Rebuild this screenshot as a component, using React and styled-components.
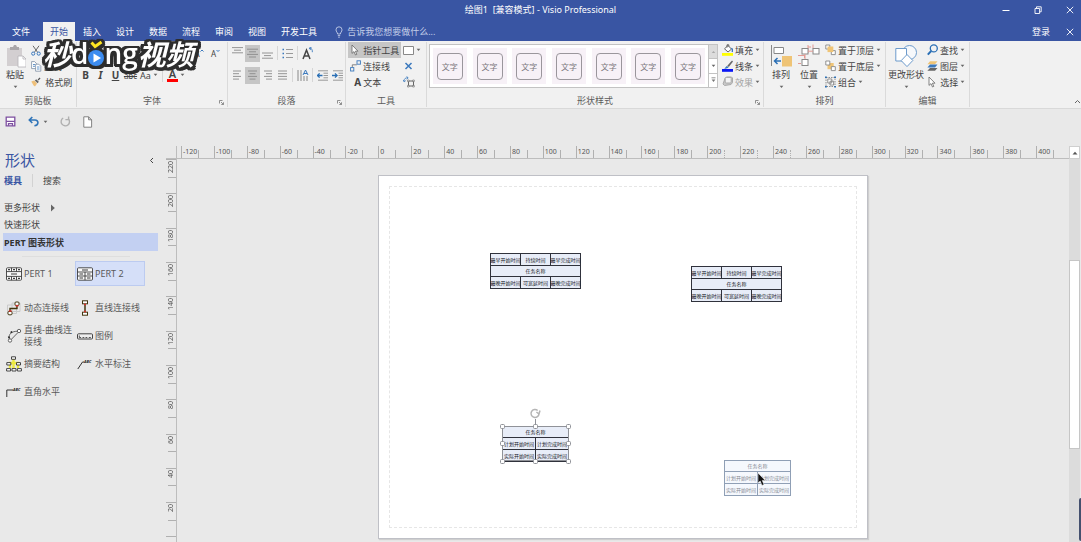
import React from 'react'
import styled, { createGlobalStyle, css } from 'styled-components';

const GlobalStyle = createGlobalStyle`
  * { box-sizing: border-box; }
  body {
    margin: 0;
    background: #e9e9e9;
    color: #444;
    font-family: "Noto Sans", "Noto Sans CJK SC", sans-serif;
    font-size: 9px;
  }
  button, input {
    font: inherit;
    color: inherit;
    background: none;
    border: 0;
    padding: 0;
    margin: 0;
  }
  h1, h2, p { margin: 0; font-weight: 400; }
  svg { display: block; flex: none; }
`;

const Window = styled.div`
  position: relative;
  display: flex;
  flex-direction: column;
  min-height: 100vh;
  overflow: hidden;
`;

/* ---------- title and tabs ---------- */

const TitleBar = styled.header`
  display: grid;
  grid-template-columns: 1fr auto 1fr;
  align-items: center;
  height: 20px;
  background: #3955a3;
  color: #fff;
`;
const Title = styled.h1`
  grid-column: 2;
  font-size: 9px;
  line-height: 20px;
  white-space: pre;
`;
const WindowButtons = styled.div`
  display: flex;
  justify-content: flex-end;
  gap: 10px;
`;
const WindowButton = styled.button`
  display: flex;
  align-items: center;
  justify-content: center;
  width: 22px;
  height: 20px;
`;
const TabRow = styled.nav`
  display: flex;
  align-items: stretch;
  height: 21px;
  padding-top: 2px;
  background: #3955a3;
  color: #fff;
`;
const Tab = styled.button`
  padding: 0 7px;
  margin-right: 1px;
  line-height: 18px;
  white-space: nowrap;
  ${p => p.$file && css`width: 42px; padding: 0 10px;`}
  ${p => p.$active && css`background: #f1f1f1; color: #3955a3;`}
`;
const TellMe = styled.label`
  display: flex;
  align-items: center;
  gap: 4px;
  flex: 1;
  margin-left: 10px;
  input { width: 140px; outline: 0; }
  input::placeholder { color: #c3cde8; opacity: 1; }
`;
const SignIn = styled.button`
  margin-right: 9px;
`;

/* ---------- ribbon ---------- */

const Ribbon = styled.div`
  display: flex;
  height: 68px;
  padding-top: 1px;
  background: #f1f1f1;
  border-bottom: 1px solid #d9d9d9;
`;
const Group = styled.section`
  position: relative;
  display: flex;
  flex-direction: column;
  flex: none;
  width: ${p => p.$w}px;
  height: 65px;
  border-right: 1px solid #dadada;
`;
const GroupBody = styled.div`
  display: flex;
  flex: 1;
  padding-left: ${p => p.$pad || 1}px;
`;
const GroupLabel = styled.h2`
  font-size: 9px;
  line-height: 12px;
  text-align: center;
  color: #5c5c5c;
`;
const Launcher = styled.button`
  position: absolute;
  right: 3px;
  bottom: 2px;
`;
const Collapse = styled.button`
  margin: auto 0 4px auto;
`;
const Stack = styled.div`
  display: flex;
  flex-direction: column;
  flex: ${p => (p.$grow ? 1 : 'none')};
  padding-left: ${p => p.$pad || 0}px;
`;
const ToolRow = styled.div`
  display: flex;
  align-items: center;
  height: 22px;
  ${p => p.$end && css`
    justify-content: flex-end;
    gap: 2px;
    padding-right: 4px;
  `}
`;
const SmallButton = styled.button`
  display: flex;
  align-items: center;
  gap: 2px;
  height: 16px;
  padding: 0 2px;
  white-space: nowrap;
  background: ${p => (p.$pressed ? '#c6c6c6' : 'none')};
  color: ${p => (p.$off ? '#a3a3a3' : '#444')};
`;
const BigButton = styled.button`
  display: flex;
  flex-direction: column;
  align-items: center;
  width: ${p => p.$w || 28}px;
  padding-top: 2px;
  line-height: 14px;
  white-space: nowrap;
  svg + span { margin-bottom: 3px; }
`;
const IconButton = styled.button`
  display: flex;
  align-items: center;
  justify-content: center;
  width: 15px;
  height: 17px;
  background: ${p => (p.$pressed ? '#c6c6c6' : 'none')};
`;
const Letter = styled.span`
  font-size: ${p => (p.$small ? 8 : 10)}px;
  font-weight: ${p => (p.$bold ? 700 : 400)};
  font-style: ${p => (p.$italic ? 'italic' : 'normal')};
  text-decoration: ${p => p.$line || 'none'};
`;
const ColourLetter = styled.span`
  font-size: 11px;
  line-height: 10px;
  font-weight: 600;
  border-bottom: 3px solid #f00;
  padding: 0 2px;
`;
const Divider = styled.i`
  width: 1px;
  height: 14px;
  margin: 0 2px;
  background: #d6d6d6;
`;
const Gallery = styled.div`
  display: flex;
  width: 289px;
  height: 44px;
  margin: 2px 0 0 1px;
  border: 1px solid #c3c3c3;
  background: #fff;
`;
const Swatches = styled.div`
  display: flex;
  flex: 1;
  align-items: center;
  justify-content: space-around;
`;
const Swatch = styled.button`
  display: flex;
  align-items: center;
  justify-content: center;
  width: 34px;
  height: 36px;
  background: #f7f1f7;
  span {
    width: 26px;
    border: 1px solid #9a969c;
    border-radius: 4px;
    font-size: 8px;
    line-height: 25px;
    color: #7a767c;
  }
`;
const GalleryScroll = styled.div`
  display: flex;
  flex-direction: column;
  width: 9px;
  border-left: 1px solid #c3c3c3;
  button {
    display: flex;
    align-items: center;
    justify-content: center;
    flex: 1;
  }
  button:first-child { background: #dcdcdc; }
  button + button { border-top: 1px solid #c3c3c3; }
`;
const QuickBar = styled.div`
  display: flex;
  align-items: center;
  gap: 12px;
  height: 25px;
  padding-left: 5px;
  button { display: flex; align-items: center; gap: 3px; }
`;

/* ---------- shapes pane ---------- */

const Body = styled.div`
  display: flex;
  flex: 1;
`;
const Sidebar = styled.aside`
  width: 166px;
  padding: 16px 8px 0 3px;
`;
const PaneHead = styled.div`
  display: flex;
  align-items: center;
  justify-content: space-between;
  height: 20px;
  padding: 0 4px 0 2px;
  h2 { font-size: 15px; line-height: 20px; color: #3955a3; }
`;
const PaneTabs = styled.div`
  display: flex;
  align-items: center;
  height: 20px;
  padding-left: 1px;
  margin-bottom: 9px;
`;
const PaneTab = styled.button`
  padding-right: 10px;
  & + & { padding: 0 0 0 10px; border-left: 1px solid #d2d2d2; }
  ${p => p.$active && css`color: #3955a3; font-weight: 700;`}
`;
const Stencil = styled.button`
  display: flex;
  align-items: center;
  gap: 11px;
  width: 100%;
  height: ${p => (p.$active ? 18 : 17)}px;
  padding-left: 1px;
  ${p => p.$active && css`background: #c3d0f2; color: #333; font-weight: 700;`}
`;
const Rule = styled.hr`
  width: 108px;
  margin: 5px 0 4px 19px;
  border: 0;
  border-top: 1px solid #dedede;
`;
const MasterGrid = styled.div`
  display: grid;
  grid-template-columns: 71px 72px;
  margin-bottom: ${p => p.$gap || 0}px;
  padding-left: 1px;
`;
const Master = styled.button`
  display: flex;
  align-items: center;
  gap: 2px;
  height: ${p => p.$h || 28}px;
  padding-left: 2px;
  line-height: 12px;
  text-align: left;
  color: #5a5a5a;
  ${p => p.$active && css`
    width: 70px;
    background: #d5dff8;
    border: 1px solid #bccbf0;
    padding-left: 1px;
  `}
`;

/* ---------- drawing area ---------- */

const Drawing = styled.main`
  display: grid;
  grid-template-columns: 11px 1fr 12px;
  grid-template-rows: 13px 1fr;
  flex: 1;
  padding-top: 12px;
`;
const Corner = styled.div`
  border-right: 1px solid #bdbdbd;
  border-bottom: 1px solid #bdbdbd;
`;
const RulerTop = styled.div`
  display: flex;
  padding-left: 4px;
  border-bottom: 1px solid #bdbdbd;
`;
const TickX = styled.div`
  position: relative;
  flex: 1 1 0;
  min-width: 0;
  padding-left: 1px;
  border-left: 1px solid #b0b0b0;
  font-size: 7px;
  line-height: 12px;
  color: #555;
  &::after {
    content: "";
    position: absolute;
    left: 50%;
    bottom: 0;
    height: 8px;
    border-left: 1px ${p => (p.$mark ? 'dotted' : 'solid')} #b0b0b0;
  }
`;
const RulerLeft = styled.div`
  display: flex;
  flex-direction: column;
  border-right: 1px solid #bdbdbd;
`;
const TickY = styled.div`
  position: relative;
  flex: ${p => (p.$last ? 1 : 9)} 1 0;
  min-height: 0;
  overflow: hidden;
  padding-top: 1px;
  border-top: 1px solid #b0b0b0;
  font-size: 7px;
  line-height: 9px;
  color: #555;
  span {
    display: block;
    writing-mode: vertical-rl;
    transform: rotate(180deg);
  }
  ${p => !p.$last && css`
    &::after {
      content: "";
      position: absolute;
      top: 50%;
      right: 0;
      width: 8px;
      border-top: 1px solid #b0b0b0;
    }
  `}
`;
const Canvas = styled.div`
  position: relative;
  overflow: hidden;
`;
const Page = styled.div`
  position: absolute;
  left: 201px;
  top: 16px;
  width: 490px;
  height: 364px;
  padding: 10px;
  background: #fff;
  border: 1px solid #bfc0c6;
  box-shadow: 1px 1px 1px #cfcfcf;
`;
const Margins = styled.div`
  height: 100%;
  border: 1px dashed #e6e6e6;
`;
const Shape = styled.div`
  position: absolute;
  left: ${p => p.$x}px;
  top: ${p => p.$y}px;
  width: ${p => p.$w}px;
  display: grid;
  grid-template-columns: repeat(${p => p.$cols}, 1fr);
  gap: 1px;
  padding: 1px;
  background: ${p => (p.$ghost ? '#8f9fb5' : '#30323c')};
  color: ${p => (p.$ghost ? '#858a94' : '#16181f')};
`;
const Cell = styled.div`
  display: flex;
  align-items: center;
  justify-content: center;
  min-width: 0;
  height: ${p => (p.$wide ? 10 : 11)}px;
  background: ${p => (p.$ghost ? '#f5f8fd' : '#e8edf8')};
  font-size: 5px;
  line-height: 8px;
  white-space: nowrap;
  ${p => p.$wide && css`grid-column: 1 / -1;`}
`;
const Handles = styled.svg`
  position: absolute;
  left: ${p => p.$x}px;
  top: ${p => p.$y}px;
`;

const Scroll = styled.div`
  grid-column: 3;
  grid-row: 1 / 3;
  display: flex;
  flex-direction: column;
  margin-right: 1px;
  background: #dcdcdc;
`;
const ScrollUp = styled.button`
  display: flex;
  align-items: center;
  justify-content: center;
  height: 13px;
  border: 1px solid #cfcfcf;
  background: #fff;
`;
const Track = styled.div`
  flex: ${p => p.$size} 1 0;
`;
const Thumb = styled.div`
  flex: 188 1 0;
  border: 1px solid #c6c6c6;
  background: #fff;
`;
const EdgeTab = styled.div`
  position: absolute;
  right: 0;
  bottom: 1px;
  width: 2px;
  height: 43px;
  background: #44506e;
  border-radius: 2px 0 0 2px;
`;

/* ---------- video mark ---------- */

const Mark = styled.div`
  position: absolute;
  left: 43px;
  top: 36px;
  display: flex;
  align-items: center;
  height: 34px;
  color: #fff;
  white-space: nowrap;
  filter: drop-shadow(2px 0 0 #2d2d2d) drop-shadow(-2px 0 0 #2d2d2d)
    drop-shadow(0 2px 0 #2d2d2d) drop-shadow(0 -2px 0 #2d2d2d)
    drop-shadow(1px 1px 0 #2d2d2d) drop-shadow(-1px 0 0 #2d2d2d);
  pointer-events: none;
`;
const MarkHan = styled.span`
  font-family: "Noto Sans CJK SC", sans-serif;
  font-size: 28px;
  font-style: italic;
  font-weight: 700;
  line-height: 34px;
`;
const MarkLatin = styled.span`
  font-family: "Open Sans", sans-serif;
  font-size: 28px;
  font-weight: 600;
  line-height: 34px;
`;

/* ---------- icons ---------- */

const Svg = ({ w, h, children, ...rest }) => (
  <svg width={w} height={h} viewBox={`0 0 ${w} ${h}`} fill="none" stroke="#666" strokeWidth="1" aria-hidden="true" {...rest}>
    {children}
  </svg>
);
const Caret = () => (
  <Svg w={5} h={4} stroke="none"><path d="M.7.8h3.6L2.5 3z" fill="#666" /></Svg>
);
const CloseIcon = () => (
  <Svg w={8} h={8} stroke="#fff" strokeWidth=".9"><path d="M.8.8l6.4 6.4M7.2.8L.8 7.2" /></Svg>
);
const LauncherIcon = () => (
  <Svg w={5} h={5} stroke="#777" strokeWidth=".8"><path d="M.5 3.5v-3h3M2 2l2.4 2.4M4.5 2.3v2.2H2.3" /></Svg>
);
const PasteIcon = () => (
  <Svg w={22} h={24} stroke="none">
    <path d="M3 4h15v18H3z" fill="#d3cfd1" />
    <path d="M6 3h3l1-2h2l1 2h2v3H6z" fill="#aaa7aa" />
    <path d="M14 12h5l3 3v8h-8z" fill="#fff" stroke="#b5b2b7" strokeWidth=".8" />
    <path d="M19 12v3h3" stroke="#b5b2b7" strokeWidth=".8" />
  </Svg>
);
const CutIcon = () => (
  <Svg w={10} h={11} stroke="#666"><path d="M2 .8l4.6 6.5M8 .8L3.4 7.3" /><circle cx="2.2" cy="8.6" r="1.6" stroke="#3a78bd" /><circle cx="7.7" cy="8.6" r="1.6" stroke="#3a78bd" /></Svg>
);
const CopyIcon = () => (
  <Svg w={11} h={11} stroke="#7d8ea5" strokeWidth=".8"><path d="M.6.6h3l2 2v5h-5z" fill="#fff" /><path d="M4.6 3.2h3.2l2 2v5H4.6z" fill="#fff" /><path d="M2 3.5h2M2 5.3h2M6 6h2.5M6 8h2.5" stroke="#3a78bd" /></Svg>
);
const BrushIcon = () => (
  <Svg w={10} h={10} stroke="none"><path d="M.3 4.6l3-1 2.8 3L4 9.4 2.6 8.6z" fill="#eec07b" /><path d="M3.8 3.4l1.4-1.2 2.6 2.6-1.2 1.4z" fill="#666" /><path d="M6.6 2.6L8.6.6l.9.9-2 2z" fill="#555" /></Svg>
);
const LinesIcon = ({ rows }) => (
  <Svg w={11} h={12} stroke="#8a8a8a" strokeWidth=".9">
    {rows.map(([x1, x2, y]) => <path key={y} d={`M${x1} ${y}H${x2}`} />)}
  </Svg>
);
const BulletsIcon = () => (
  <Svg w={11} h={11}><path d="M.5 1.5h1.5M.5 5.5h1.5M.5 9.5h1.5" stroke="#3a78bd" strokeWidth="1.5" /><path d="M4 1.5h7M4 5.5h7M4 9.5h7" stroke="#999" /></Svg>
);
const RotateIcon = () => (
  <Svg w={12} h={13} stroke="#444" strokeWidth="1.5">
    <path d="M1 12L4.5 3 8 12M2.3 9h4.4" />
    <path d="M7.5 1.2c2.6 0 3 1.6 2.8 4M9.6.2L7.2 1.2l1.6 1.9" stroke="#3a78bd" strokeWidth=".9" />
  </Svg>
);
const TextDirIcon = () => (
  <Svg w={12} h={13} stroke="#888"><path d="M1 1v11M4 1v11M7 7v5M10 7v5" /><path d="M6 6L8.5 1 11 6M7 4.5h3" stroke="#3a78bd" /></Svg>
);
const IndentIcon = ({ right }) => (
  <Svg w={11} h={11} stroke="#999"><path d="M1 .8h10M6.5 3.2H11M6.5 5.5H11M6.5 7.8H11M1 10.2h10" /><path d={right ? 'M0 5.5h5M3 3.4l2.1 2.1L3 7.6' : 'M5.5 5.5h-5M2.6 3.4L.5 5.5l2.1 2.1'} stroke="#2a6fb5" strokeWidth="1.3" /></Svg>
);
const PointerIcon = () => (
  <Svg w={9} h={12} strokeWidth=".8"><path d="M2 1v8.4l2-1.8 1.5 3.4 1.3-.6-1.4-3.2H8z" fill="#fff" /></Svg>
);
const ConnectorIcon = () => (
  <Svg w={11} h={12} stroke="#3a78bd" strokeWidth=".9"><path d="M2.3 7.2V4.8H6.8" stroke="#777" /><rect x="7" y=".8" width="3.4" height="3.4" /><rect x=".6" y="7.6" width="3.2" height="3.4" /></Svg>
);
const PointsIcon = () => (
  <Svg w={12} h={12}><path d="M5.5 5h5v5h-5z" /><path d="M4.5 4h1.6v1.6H4.5zM9.7 4h1.6v1.6H9.7zM4.5 9.4h1.6V11H4.5zM9.7 9.4h1.6V11H9.7z" fill="#fff" strokeWidth=".6" /><path d="M1 5.5C1 2.6 2.5 1.6 5 1.8M3.5.4L5.2 1.8 3.6 3.2M.2 4l1 1.8L2.8 4.6" stroke="#3a78bd" strokeWidth=".8" /></Svg>
);
const FillIcon = () => (
  <Svg w={11} h={12}><path d="M2.5 4.8L6 1.5l3.5 3.6L6 8z" fill="#fff" /><path d="M5 3.5V.8h1.8v1.8" /><path d="M9.3 4.4c1.5.6 1.5 2 .8 3.4" stroke="#3a78bd" strokeWidth="1.5" /><path d="M0 9h11v2.8H0z" fill="#ff0" stroke="none" /></Svg>
);
const LineIcon = () => (
  <Svg w={11} h={12} stroke="none"><path d="M10 .4l1 1L6.8 7 5.3 5.8z" fill="#666" /><path d="M5 5.9l1.6 1.4C5.4 8.8 3.6 8.7 2 8.6 3.6 7.8 3.6 6.3 5 5.9z" fill="#3a78bd" /><path d="M0 9h11v2.8H0z" fill="#0b17f5" /></Svg>
);
const EffectIcon = () => (
  <Svg w={11} h={12} stroke="#aaa"><path d="M3 2.5L4.5 1h5l1 1v4.5L9 8.5l-6.5 1L1 8z" fill="#c9c9c9" /><rect x="3.2" y="1.4" width="6" height="5.6" rx="1" fill="#f4f4f4" /></Svg>
);
const AlignIcon = () => (
  <Svg w={22} h={24} stroke="#888"><path d="M1.5 1v21" /><path d="M4 3.5h9.5v6H4z" fill="#fff" /><path d="M12 12h10v10.5H12z" fill="#efc476" stroke="none" /><path d="M11 17H4.5M7.5 14l-3 3 3 3" stroke="#2a6fb5" strokeWidth="1.5" /></Svg>
);
const PositionIcon = () => (
  <Svg w={22} h={24} stroke="#888"><path d="M10 1v8M10 3h3M0 11.5h6M6.5 11v3M0 19.5h3M15 .5v4" stroke="#e39a93" /><rect x="4" y="4.5" width="6" height="5.5" fill="#fff" /><rect x="15" y="4.5" width="6" height="5.5" fill="#fff" /><rect x="4" y="15.5" width="6" height="6" fill="#fff" /><path d="M10 7.2h5M7 10v5" stroke="#e39a93" /></Svg>
);
const FrontIcon = ({ back }) => (
  <Svg w={11} h={12} stroke="#888" strokeWidth=".9">
    {back && <path d="M2.5 3h6.2v6.2H2.5z" fill="#efc476" stroke="none" />}
    <path d="M.8 1h4v4h-4zM6.3 6.6h4v4h-4z" fill="#fff" />
    {!back && <path d="M2.5 2.5h5.8v5.6H2.5z" fill="#efc476" stroke="none" />}
  </Svg>
);
const GroupIcon = () => (
  <Svg w={11} h={12} stroke="#777" strokeWidth=".8"><path d="M1 1.5h9v9H1z" strokeDasharray="1.5 1" /><path d="M2.8 3h4v4h-4zM5 5.2h3.6V9H5z" fill="#fff" /><path d="M0 1.3h1.8M9.2 1.3H11M0 10.7h1.8M9.2 10.7H11" stroke="#2a6fb5" strokeWidth="1.6" /></Svg>
);
const ChangeIcon = () => (
  <Svg w={22} h={24} stroke="#6d9bcc"><circle cx="14.5" cy="8.5" r="7" fill="#f6f8fb" /><path d="M.8 4.5h10.7V17H.8z" fill="#fff" /><path d="M12 10.5l5.8 6L12 22.6l-5.8-6z" fill="#fff" /></Svg>
);
const FindIcon = () => (
  <Svg w={11} h={12} stroke="#2a6fb5"><circle cx="6.8" cy="4.4" r="3.5" strokeWidth="1.3" /><path d="M4.2 7L.8 10.6" strokeWidth="2" /></Svg>
);
const LayerIcon = () => (
  <Svg w={11} h={12} stroke="none"><path d="M3 1.2h7.5L8 4.2H.4z" fill="#efc476" /><path d="M3 4.6h7.5L8 7.4H.4z" fill="#3a78bd" /><path d="M3 8h7.5L8 10.8H.4z" fill="#666" /></Svg>
);

const PertIcon = ({ two }) => (
  <Svg w={16} h={14} stroke="#3c3c3c" strokeWidth=".9">
    <rect x=".5" y=".8" width="15" height="12.4" rx="1" fill="#fafafa" />
    <path d={two ? 'M.5 5h15M.5 9h15M8 5v8.2' : 'M.5 4.6h15M.5 9.4h15M5.5.8v3.8M10.5.8v3.8M5.5 9.4v3.8M10.5 9.4v3.8'} />
    <path d={two ? 'M5 3h6M2.5 7h3.5M10 7h3.5M2.5 11h3.5M10 11h3.5' : 'M5 7h6M2 2.7h2M7 2.7h2M12 2.7h2M2 11.3h2M7 11.3h2M12 11.3h2'} strokeWidth="1.2" />
  </Svg>
);
const DynamicIcon = () => (
  <Svg w={16} h={15} stroke="#42360f"><path d="M1.5 4h9v8.5h-9zM6 2h8v8.5H6z" stroke="#cacaca" /><path d="M4 10V7.5h7V4.5" strokeWidth="1.4" /><rect x="9" y="1" width="4" height="3.4" rx="1" fill="#fff" /><rect x="2" y="10.4" width="4" height="3.4" rx="1" fill="#fff" /><path d="M9.6 4.8h2.8M2.8 10h2.8" stroke="#d3302b" strokeWidth="1.4" /></Svg>
);
const StraightIcon = () => (
  <Svg w={16} h={16} stroke="#42360f"><path d="M8 4v8" strokeWidth="1.5" /><rect x="5.5" y=".8" width="5" height="3" fill="#fff" /><rect x="5.5" y="12.2" width="5" height="3" fill="#fff" /><path d="M7 4.6h2M7 11.4h2" stroke="#d3302b" strokeWidth="1.5" /></Svg>
);
const CurveIcon = () => (
  <Svg w={16} h={16} stroke="#555" strokeWidth=".9"><circle cx="13" cy="3" r="1.7" fill="#fff" /><circle cx="4" cy="12.5" r="1.7" fill="#fff" /><path d="M11.5 3.2C5 3.5 2.5 6 3.4 10.8M12 4.5L5.3 11.4" /><path d="M4.6 4.6l1.5-1M2.5 8.5l.8 1.6" stroke="#222" strokeWidth="1.5" /></Svg>
);
const LegendIcon = () => (
  <Svg w={16} h={7} stroke="#444"><rect x=".5" y=".8" width="15" height="5.2" rx="1" fill="#eee" /><path d="M2.3 2.5v2h1.8M5.5 4.5h1.8M8.5 4.5h1.8M11.8 4.5h2" strokeWidth=".9" /></Svg>
);
const SummaryIcon = () => (
  <Svg w={16} h={16} stroke="#333" strokeWidth=".9"><path d="M7.5 3v4H4v5M7.5 7H12v5M7.5 7v6" stroke="#eeea3e" strokeWidth="2.4" /><path d="M5.5.8h4v2.5h-4zM.8 6.6h4v2.4h-4zM10.5 6.6h4v2.4h-4zM.6 12.6h4V15h-4zM6 12.6h4V15H6zM11.4 12.6h4V15h-4z" fill="#fff" /></Svg>
);
const CalloutText = styled.text`
  font: italic 700 4px "Noto Sans", sans-serif;
  fill: #222;
  stroke: none;
`;
const CalloutIcon = ({ corner }) => (
  <Svg w={16} h={12} stroke="#333">
    <path d={corner ? 'M.8 11V4H7' : 'M.8 11L5.5 4H7'} />
    <CalloutText x="7" y="5">ABC</CalloutText>
  </Svg>
);

/* ---------- data ---------- */

const tabs = ['插入', '设计', '数据', '流程', '审阅', '视图', '开发工具'];
const ticksX = Array.from({ length: 27 }, (_, i) => i * 20 - 120);
const ticksY = Array.from({ length: 12 }, (_, i) => 220 - i * 20);
const masters = [
  ['动态连接线', <DynamicIcon />],
  ['直线连接线', <StraightIcon />],
  ['直线-曲线连接线', <CurveIcon />],
  ['图例', <LegendIcon />],
  ['摘要结构', <SummaryIcon />],
  ['水平标注', <CalloutIcon />],
  ['直角水平', <CalloutIcon corner />],
];
const pert1 = ['最早开始时间', '持续时间', '最早完成时间', '任务名称', '最晚开始时间', '可宽延时间', '最晚完成时间'];
const pert2 = ['任务名称', '计划开始时间', '计划完成时间', '实际开始时间', '实际完成时间'];

// [x1, x2, y] of each stroke in the alignment icons
const full = [[1, 10, 2], [1, 10, 4.7], [1, 10, 7.4], [1, 10, 10.1]];
const left = [[1, 9, 2], [1, 7, 4.7], [1, 9, 7.4], [1, 7, 10.1]];
const centre = [[1, 10, 2], [2.5, 8.5, 4.7], [1, 10, 7.4], [2.5, 8.5, 10.1]];
const right = [[2, 10, 2], [4, 10, 4.7], [2, 10, 7.4], [4, 10, 10.1]];
const top = [[0, 11, 0.6], [2, 9, 3.2], [0, 11, 5.8]];
const middle = [[0, 11, 2.2], [2, 9, 4.8], [0, 11, 7.4], [2, 9, 10]];
const bottom = [[0, 11, 6], [2, 9, 8.6], [0, 11, 11.2]];

const PertShape = ({ x, y, two, ghost }) => (
  <Shape $x={x} $y={y} $w={two ? 67 : 91} $cols={two ? 2 : 3} $ghost={ghost}>
    {(two ? pert2 : pert1).map(t => (
      <Cell key={t} $wide={t === '任务名称'} $ghost={ghost}>{t}</Cell>
    ))}
  </Shape>
);

const App = () => {
  return (
    <Window>
      <GlobalStyle />
      <TitleBar>
        <Title>绘图1  [兼容模式] - Visio Professional</Title>
        <WindowButtons>
          <WindowButton aria-label="最小化"><Svg w={8} h={8} stroke="#fff"><path d="M.5 4.5h7" /></Svg></WindowButton>
          <WindowButton aria-label="还原"><Svg w={8} h={8} stroke="#fff" strokeWidth=".9"><path d="M1 2.5h4.6v5H1zM2.5 2.5V.8h4.7v5H5.6" /></Svg></WindowButton>
          <WindowButton aria-label="关闭"><CloseIcon /></WindowButton>
        </WindowButtons>
      </TitleBar>
      <TabRow>
        <Tab $file>文件</Tab>
        <Tab $active>开始</Tab>
        {tabs.map(t => <Tab key={t}>{t}</Tab>)}
        <TellMe>
          <Svg w={8} h={12} stroke="#c3cde8" strokeWidth=".9"><path d="M2.6 8C2.6 6.4 1 5.8 1 3.8a3 3 0 0 1 6 0C7 5.8 5.4 6.4 5.4 8zM2.8 9.6h2.4M3.2 11.2h1.6" /></Svg>
          <input aria-label="告诉我" placeholder="告诉我您想要做什么..." />
        </TellMe>
        <SignIn>登录</SignIn>
        <WindowButton aria-label="关闭文档"><CloseIcon /></WindowButton>
      </TabRow>

      <Ribbon>
        <Group $w={77}>
          <GroupBody>
            <BigButton><PasteIcon /><span>粘贴</span><Caret /></BigButton>
            <Stack>
              <SmallButton aria-label="剪切"><CutIcon /></SmallButton>
              <SmallButton><CopyIcon />复制</SmallButton>
              <SmallButton><BrushIcon />&nbsp;格式刷</SmallButton>
            </Stack>
          </GroupBody>
          <GroupLabel>剪贴板</GroupLabel>
        </Group>

        <Group $w={151}>
          <GroupBody>
            <Stack $grow>
              <ToolRow $end>
                <IconButton aria-label="增大字号"><Letter>A</Letter><Svg w={4} h={9} stroke="#3a78bd"><path d="M.5 2.5L2 1l1.5 1.5" /></Svg></IconButton>
                <IconButton aria-label="减小字号"><Letter $small>A</Letter><Svg w={4} h={9} stroke="#3a78bd"><path d="M.5 1L2 2.5 3.5 1" /></Svg></IconButton>
              </ToolRow>
              <ToolRow>
                <IconButton aria-label="加粗"><Letter $bold>B</Letter></IconButton>
                <IconButton aria-label="倾斜"><Letter $bold $italic>I</Letter></IconButton>
                <IconButton aria-label="下划线"><Letter $bold $line="underline">U</Letter></IconButton>
                <IconButton aria-label="删除线"><Letter $small $line="line-through">abc</Letter></IconButton>
                <SmallButton>Aa<Caret /></SmallButton>
                <Divider />
                <SmallButton><ColourLetter>A</ColourLetter><Caret /></SmallButton>
              </ToolRow>
            </Stack>
          </GroupBody>
          <GroupLabel>字体</GroupLabel>
          <Launcher aria-label="字体设置"><LauncherIcon /></Launcher>
        </Group>

        <Group $w={118}>
          <GroupBody $pad={2}>
            <Stack>
              <ToolRow>
                <IconButton aria-label="顶端对齐"><LinesIcon rows={top} /></IconButton>
                <IconButton aria-label="中部对齐" $pressed><LinesIcon rows={middle} /></IconButton>
                <IconButton aria-label="底端对齐"><LinesIcon rows={bottom} /></IconButton>
                <Divider />
                <IconButton aria-label="项目符号"><BulletsIcon /></IconButton>
                <Divider />
                <IconButton aria-label="旋转文本"><RotateIcon /></IconButton>
              </ToolRow>
              <ToolRow>
                <IconButton aria-label="左对齐"><LinesIcon rows={left} /></IconButton>
                <IconButton aria-label="居中" $pressed><LinesIcon rows={centre} /></IconButton>
                <IconButton aria-label="右对齐"><LinesIcon rows={right} /></IconButton>
                <IconButton aria-label="两端对齐"><LinesIcon rows={full} /></IconButton>
                <Divider />
                <IconButton aria-label="文字方向"><TextDirIcon /></IconButton>
                <Divider />
                <IconButton aria-label="减少缩进"><IndentIcon /></IconButton>
                <IconButton aria-label="增加缩进"><IndentIcon right /></IconButton>
              </ToolRow>
            </Stack>
          </GroupBody>
          <GroupLabel>段落</GroupLabel>
          <Launcher aria-label="段落设置"><LauncherIcon /></Launcher>
        </Group>

        <Group $w={81}>
          <GroupBody $pad={2}>
            <Stack>
              <SmallButton $pressed><PointerIcon />&nbsp;指针工具</SmallButton>
              <SmallButton><ConnectorIcon />连接线</SmallButton>
              <SmallButton>&nbsp;<Letter $bold>A</Letter>文本</SmallButton>
            </Stack>
            <Stack>
              <SmallButton aria-label="矩形"><Svg w={11} h={9} stroke="#888"><path d="M.5.5h10v8H.5z" fill="#fff" /></Svg><Caret /></SmallButton>
              <SmallButton aria-label="连接点"><Svg w={11} h={8} stroke="#3a78bd" strokeWidth="1.5"><path d="M2.5 1l6 6M8.5 1l-6 6" /></Svg></SmallButton>
              <SmallButton aria-label="文本块"><PointsIcon /></SmallButton>
            </Stack>
          </GroupBody>
          <GroupLabel>工具</GroupLabel>
        </Group>

        <Group $w={337}>
          <GroupBody>
            <Gallery>
              <Swatches>
                {[1, 2, 3, 4, 5, 6, 7].map(n => <Swatch key={n}><span>文字</span></Swatch>)}
              </Swatches>
              <GalleryScroll>
                <button aria-label="上一行"><Svg w={5} h={4} stroke="none"><path d="M.8 3h3.4L2.5 1z" fill="#aaa" /></Svg></button>
                <button aria-label="下一行"><Caret /></button>
                <button aria-label="更多样式"><Svg w={5} h={6} stroke="#777" strokeWidth=".8"><path d="M.5.8h4" /><path d="M.6 2.6h3.8L2.5 5z" fill="#777" stroke="none" /></Svg></button>
              </GalleryScroll>
            </Gallery>
            <Stack $pad={2}>
              <SmallButton><FillIcon />填充<Caret /></SmallButton>
              <SmallButton><LineIcon />线条<Caret /></SmallButton>
              <SmallButton $off><EffectIcon />效果<Caret /></SmallButton>
            </Stack>
          </GroupBody>
          <GroupLabel>形状样式</GroupLabel>
          <Launcher aria-label="形状样式设置"><LauncherIcon /></Launcher>
        </Group>

        <Group $w={122}>
          <GroupBody $pad={3}>
            <BigButton><AlignIcon /><span>排列</span><Caret /></BigButton>
            <BigButton><PositionIcon /><span>位置</span><Caret /></BigButton>
            <Stack>
              <SmallButton><FrontIcon />置于顶层<Caret /></SmallButton>
              <SmallButton><FrontIcon back />置于底层<Caret /></SmallButton>
              <SmallButton><GroupIcon />组合<Caret /></SmallButton>
            </Stack>
          </GroupBody>
          <GroupLabel>排列</GroupLabel>
        </Group>

        <Group $w={84}>
          <GroupBody>
            <BigButton $w={38}><ChangeIcon /><span>更改形状</span><Caret /></BigButton>
            <Stack>
              <SmallButton><FindIcon />查找<Caret /></SmallButton>
              <SmallButton><LayerIcon />图层<Caret /></SmallButton>
              <SmallButton><PointerIcon />&nbsp;选择<Caret /></SmallButton>
            </Stack>
          </GroupBody>
          <GroupLabel>编辑</GroupLabel>
        </Group>
        <Collapse aria-label="折叠功能区"><Svg w={7} h={5}><path d="M1 4l2.5-2.5L6 4" /></Svg></Collapse>
      </Ribbon>

      <QuickBar>
        <button aria-label="保存"><Svg w={11} h={11} stroke="#7d4fa0" strokeWidth="1.3"><path d="M1.2 1.2h8.6v8.6H1.2z" fill="#fff" /><path d="M1.2 5.4h8.6M3.5 9.8V7.6h4v2.2" /></Svg></button>
        <button aria-label="撤消"><Svg w={12} h={11} stroke="#2f74b8" strokeWidth="1.6"><path d="M4.3 1L1.3 4l3 3M1.6 4H7c4 0 4 5.6-.6 5.8" /></Svg><Caret /></button>
        <button aria-label="重复"><Svg w={11} h={11} stroke="#b0b0b0" strokeWidth="1.4"><path d="M3.2 2A4.2 4.2 0 1 0 8 2.4M8.6.6v3H5.4" /></Svg></button>
        <button aria-label="新建"><Svg w={10} h={12} stroke="#777" strokeWidth=".9"><path d="M.8.8h4.8l3 3v7.4H.8zM5.6.8v3h3" fill="#fff" /></Svg></button>
      </QuickBar>

      <Body>
        <Sidebar>
          <PaneHead>
            <h2>形状</h2>
            <button aria-label="折叠窗格"><Svg w={5} h={7} stroke="#444"><path d="M4 1L1.5 3.5 4 6" /></Svg></button>
          </PaneHead>
          <PaneTabs>
            <PaneTab $active>模具</PaneTab>
            <PaneTab>搜索</PaneTab>
          </PaneTabs>
          <Stencil>更多形状<Svg w={4} h={8} stroke="none"><path d="M0 .5L3.8 4 0 7.5z" fill="#666" /></Svg></Stencil>
          <Stencil>快速形状</Stencil>
          <Stencil $active>PERT 图表形状</Stencil>
          <Rule />
          <MasterGrid $gap={8}>
            <Master $h={25}><PertIcon />PERT 1</Master>
            <Master $h={25} $active><PertIcon two />PERT 2</Master>
          </MasterGrid>
          <MasterGrid>
            {masters.map(([name, icon]) => <Master key={name}>{icon}<span>{name}</span></Master>)}
          </MasterGrid>
        </Sidebar>

        <Drawing>
          <Corner />
          <RulerTop>
            {ticksX.map(n => <TickX key={n} $mark={n >= 200 && n <= 240}>{n}</TickX>)}
          </RulerTop>
          <RulerLeft>
            {ticksY.map(n => <TickY key={n} $last={n === 0}>{n > 0 && <span>{n}</span>}</TickY>)}
          </RulerLeft>
          <Canvas>
            <Page><Margins /></Page>
            <PertShape x={313} y={94} />
            <PertShape x={514} y={107} />
            <PertShape x={325} y={267} two />
            <Handles $x={321} $y={246} width="74" height="60" fill="#fff" stroke="#909298">
              <path d="M4.5 21.5h66v34h-66zM37.5 14v7" fill="none" />
              <path d="M41 8.5a4 4 0 1 1-1.3-3M42 5.5l-1 3.5-2.6-2" fill="none" stroke="#b5b5b5" strokeWidth="1.5" />
              {[[4, 21], [37, 21], [70, 21], [4, 38], [70, 38], [4, 56], [37, 56], [70, 56]].map(([x, y]) => (
                <rect key={`${x}-${y}`} x={x - 1.5} y={y - 1.5} width="4" height="4" rx="1" />
              ))}
            </Handles>
            <PertShape x={547} y={301} two ghost />
            <Handles $x={580} $y={313} width="9" height="15" fill="#111" stroke="#fff" strokeWidth=".5">
              <path d="M1 1v10l2.2-2 1.8 4.4 2-.8-1.8-4.2h3z" />
            </Handles>
          </Canvas>
          <Scroll>
            <ScrollUp aria-label="向上滚动"><Svg w={6} h={4} stroke="none"><path d="M.5 3.5h5L3 .8z" fill="#555" /></Svg></ScrollUp>
            <Track $size={102} />
            <Thumb />
            <Track $size={94} />
          </Scroll>
        </Drawing>
      </Body>
      <EdgeTab />

      <Mark>
        <MarkHan>秒</MarkHan>
        <MarkLatin>d</MarkLatin>
        <Svg w={16} h={34} stroke="none">
          <circle cx="8" cy="22" r="8" fill="#3c8cf0" />
          <path d="M5.5 17.5v9L13 22z" fill="#fff" />
          <path d="M3.5 6.5l3.6 4 6.4-4.5" stroke="#ffe522" strokeWidth="3" />
        </Svg>
        <MarkLatin>ng</MarkLatin>
        <MarkHan>视频</MarkHan>
      </Mark>
    </Window>
  )
}

export default App
